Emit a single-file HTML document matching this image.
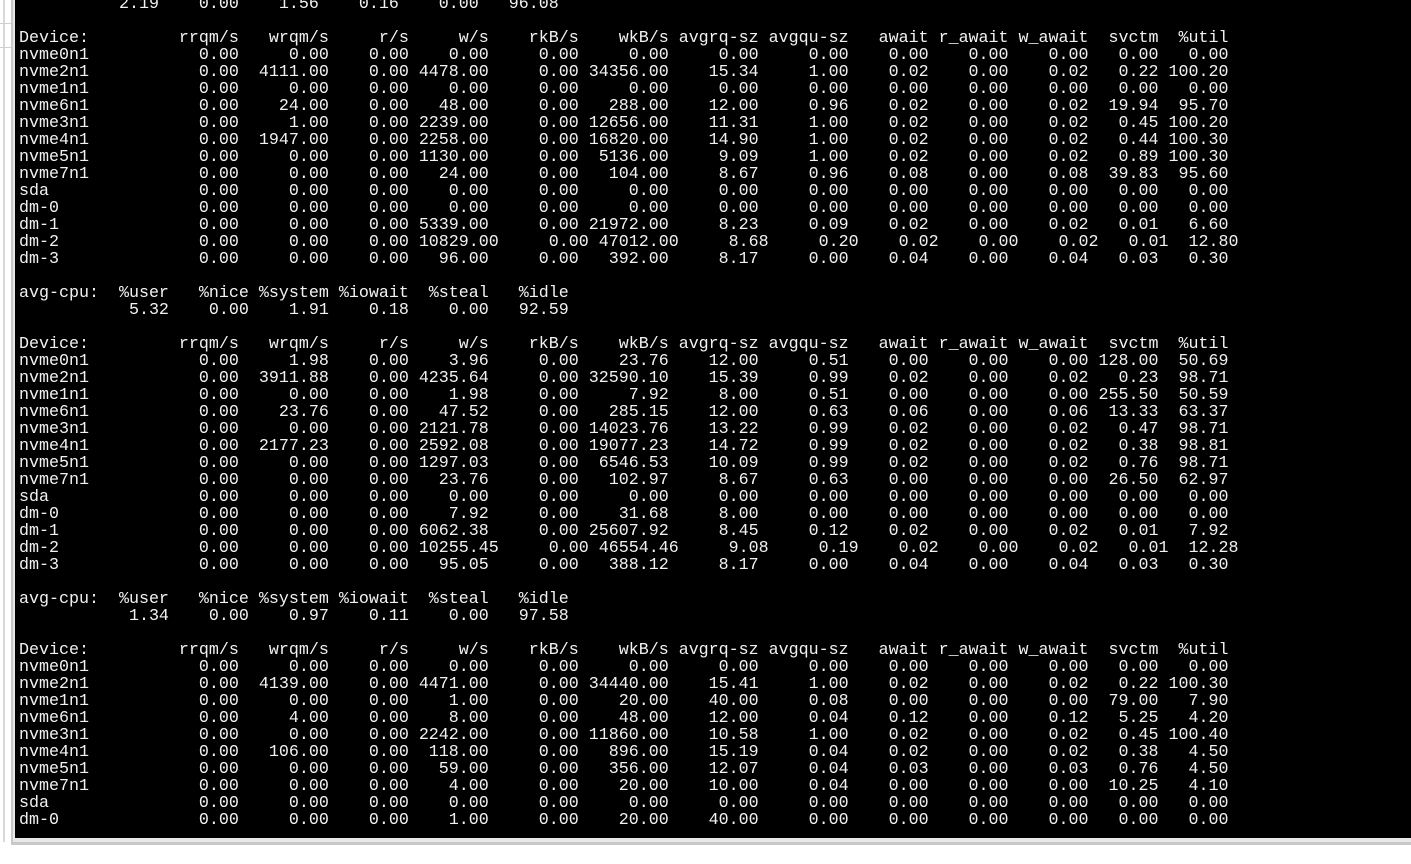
<!DOCTYPE html>
<html><head><meta charset="utf-8">
<style>
html,body{margin:0;padding:0;background:#fff;width:1411px;height:864px;overflow:hidden;position:relative}
.vl{position:absolute;left:3px;top:0;width:2px;height:842px;background:#d8d8d8}
.h1{position:absolute;left:0;top:23px;width:11px;height:1px;background:#cfcfcf}
.h2{position:absolute;left:0;top:47px;width:11px;height:1px;background:#cfcfcf}
.frame{position:absolute;left:11px;top:0;width:1400px;height:845px;background:#c8c8c8}
.frame2{position:absolute;left:13px;top:0;width:1398px;height:842px;background:#e8e8e8}
.term{position:absolute;left:15px;top:0;width:1396px;height:838px;background:#000;overflow:hidden}
pre{position:absolute;left:4px;top:-4px;margin:0;font-family:"Liberation Mono","DejaVu Sans Mono",monospace;font-size:16.67px;line-height:17px;color:#f2f2f2}
</style></head><body>
<div class="vl"></div><div class="h1"></div><div class="h2"></div>
<div class="frame"></div><div class="frame2"></div>
<div class="term"><pre>          2.19    0.00    1.56    0.16    0.00   96.08

Device:         rrqm/s   wrqm/s     r/s     w/s    rkB/s    wkB/s avgrq-sz avgqu-sz   await r_await w_await  svctm  %util
nvme0n1           0.00     0.00    0.00    0.00     0.00     0.00     0.00     0.00    0.00    0.00    0.00   0.00   0.00
nvme2n1           0.00  4111.00    0.00 4478.00     0.00 34356.00    15.34     1.00    0.02    0.00    0.02   0.22 100.20
nvme1n1           0.00     0.00    0.00    0.00     0.00     0.00     0.00     0.00    0.00    0.00    0.00   0.00   0.00
nvme6n1           0.00    24.00    0.00   48.00     0.00   288.00    12.00     0.96    0.02    0.00    0.02  19.94  95.70
nvme3n1           0.00     1.00    0.00 2239.00     0.00 12656.00    11.31     1.00    0.02    0.00    0.02   0.45 100.20
nvme4n1           0.00  1947.00    0.00 2258.00     0.00 16820.00    14.90     1.00    0.02    0.00    0.02   0.44 100.30
nvme5n1           0.00     0.00    0.00 1130.00     0.00  5136.00     9.09     1.00    0.02    0.00    0.02   0.89 100.30
nvme7n1           0.00     0.00    0.00   24.00     0.00   104.00     8.67     0.96    0.08    0.00    0.08  39.83  95.60
sda               0.00     0.00    0.00    0.00     0.00     0.00     0.00     0.00    0.00    0.00    0.00   0.00   0.00
dm-0              0.00     0.00    0.00    0.00     0.00     0.00     0.00     0.00    0.00    0.00    0.00   0.00   0.00
dm-1              0.00     0.00    0.00 5339.00     0.00 21972.00     8.23     0.09    0.02    0.00    0.02   0.01   6.60
dm-2              0.00     0.00    0.00 10829.00     0.00 47012.00     8.68     0.20    0.02    0.00    0.02   0.01  12.80
dm-3              0.00     0.00    0.00   96.00     0.00   392.00     8.17     0.00    0.04    0.00    0.04   0.03   0.30

avg-cpu:  %user   %nice %system %iowait  %steal   %idle
           5.32    0.00    1.91    0.18    0.00   92.59

Device:         rrqm/s   wrqm/s     r/s     w/s    rkB/s    wkB/s avgrq-sz avgqu-sz   await r_await w_await  svctm  %util
nvme0n1           0.00     1.98    0.00    3.96     0.00    23.76    12.00     0.51    0.00    0.00    0.00 128.00  50.69
nvme2n1           0.00  3911.88    0.00 4235.64     0.00 32590.10    15.39     0.99    0.02    0.00    0.02   0.23  98.71
nvme1n1           0.00     0.00    0.00    1.98     0.00     7.92     8.00     0.51    0.00    0.00    0.00 255.50  50.59
nvme6n1           0.00    23.76    0.00   47.52     0.00   285.15    12.00     0.63    0.06    0.00    0.06  13.33  63.37
nvme3n1           0.00     0.00    0.00 2121.78     0.00 14023.76    13.22     0.99    0.02    0.00    0.02   0.47  98.71
nvme4n1           0.00  2177.23    0.00 2592.08     0.00 19077.23    14.72     0.99    0.02    0.00    0.02   0.38  98.81
nvme5n1           0.00     0.00    0.00 1297.03     0.00  6546.53    10.09     0.99    0.02    0.00    0.02   0.76  98.71
nvme7n1           0.00     0.00    0.00   23.76     0.00   102.97     8.67     0.63    0.00    0.00    0.00  26.50  62.97
sda               0.00     0.00    0.00    0.00     0.00     0.00     0.00     0.00    0.00    0.00    0.00   0.00   0.00
dm-0              0.00     0.00    0.00    7.92     0.00    31.68     8.00     0.00    0.00    0.00    0.00   0.00   0.00
dm-1              0.00     0.00    0.00 6062.38     0.00 25607.92     8.45     0.12    0.02    0.00    0.02   0.01   7.92
dm-2              0.00     0.00    0.00 10255.45     0.00 46554.46     9.08     0.19    0.02    0.00    0.02   0.01  12.28
dm-3              0.00     0.00    0.00   95.05     0.00   388.12     8.17     0.00    0.04    0.00    0.04   0.03   0.30

avg-cpu:  %user   %nice %system %iowait  %steal   %idle
           1.34    0.00    0.97    0.11    0.00   97.58

Device:         rrqm/s   wrqm/s     r/s     w/s    rkB/s    wkB/s avgrq-sz avgqu-sz   await r_await w_await  svctm  %util
nvme0n1           0.00     0.00    0.00    0.00     0.00     0.00     0.00     0.00    0.00    0.00    0.00   0.00   0.00
nvme2n1           0.00  4139.00    0.00 4471.00     0.00 34440.00    15.41     1.00    0.02    0.00    0.02   0.22 100.30
nvme1n1           0.00     0.00    0.00    1.00     0.00    20.00    40.00     0.08    0.00    0.00    0.00  79.00   7.90
nvme6n1           0.00     4.00    0.00    8.00     0.00    48.00    12.00     0.04    0.12    0.00    0.12   5.25   4.20
nvme3n1           0.00     0.00    0.00 2242.00     0.00 11860.00    10.58     1.00    0.02    0.00    0.02   0.45 100.40
nvme4n1           0.00   106.00    0.00  118.00     0.00   896.00    15.19     0.04    0.02    0.00    0.02   0.38   4.50
nvme5n1           0.00     0.00    0.00   59.00     0.00   356.00    12.07     0.04    0.03    0.00    0.03   0.76   4.50
nvme7n1           0.00     0.00    0.00    4.00     0.00    20.00    10.00     0.04    0.00    0.00    0.00  10.25   4.10
sda               0.00     0.00    0.00    0.00     0.00     0.00     0.00     0.00    0.00    0.00    0.00   0.00   0.00
dm-0              0.00     0.00    0.00    1.00     0.00    20.00    40.00     0.00    0.00    0.00    0.00   0.00   0.00</pre></div>
</body></html>
